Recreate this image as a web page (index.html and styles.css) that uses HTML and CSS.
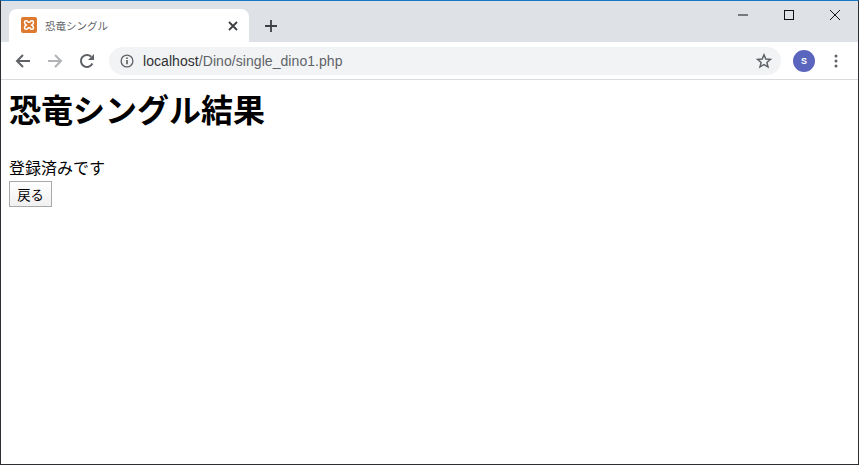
FILE: index.html
```html
<!DOCTYPE html>
<html lang="ja">
<head>
<meta charset="utf-8">
<title>恐竜シングル</title>
<link rel="stylesheet" href="styles.css">
</head>
<body>
<div class="window">
  <div class="tabstrip">
    <div class="tab">
      <svg class="favicon" viewBox="0 0 16 16" width="16" height="16"><rect width="16" height="16" rx="2" fill="#dd7a30"/><path d="M3.500 5.200C3.500 3.600 5.800 3 6.800 4.600L7.300 5.300H8.700L9.200 4.600C10.200 3 12.500 3.600 12.500 5.200C12.500 6.400 11.800 7.400 10.800 8C11.800 8.600 12.500 9.600 12.500 10.800C12.500 12.400 10.200 13 9.200 11.400L8.700 10.700H7.300L6.800 11.400C5.800 13 3.500 12.400 3.500 10.800C3.500 9.600 4.200 8.600 5.200 8C4.200 7.400 3.500 6.400 3.500 5.200Z" fill="none" stroke="#fff" stroke-width="1.500"/></svg>
      <span class="tab-title">恐竜シングル</span>
      <svg class="tab-close" viewBox="0 0 10 10" width="10" height="10"><path d="M1 1l8 8M9 1l-8 8" stroke="#3c4043" stroke-width="1.800"/></svg>
    </div>
    <svg class="newtab" viewBox="0 0 12 12" width="12" height="12"><path d="M6 0v12M0 6h12" stroke="#3c4043" stroke-width="1.800"/></svg>
    <div class="winctrls">
      <svg class="ctrl" viewBox="0 0 46 20" width="46" height="20"><path d="M18 10h10" stroke="#111" stroke-width="1"/></svg>
      <svg class="ctrl" viewBox="0 0 46 20" width="46" height="20"><rect x="18.500" y="5.500" width="9" height="9" fill="none" stroke="#111" stroke-width="1"/></svg>
      <svg class="ctrl" viewBox="0 0 46 20" width="46" height="20"><path d="M18 5l10 10M28 5L18 15" stroke="#111" stroke-width="1"/></svg>
    </div>
  </div>
  <div class="toolbar">
    <svg class="navicon" viewBox="0 0 16 16" width="16" height="16"><path d="M15 8H2M8 2L2 8l6 6" fill="none" stroke="#5f6368" stroke-width="2"/></svg>
    <svg class="navicon" viewBox="0 0 16 16" width="16" height="16"><path d="M1 8h13M8 2l6 6-6 6" fill="none" stroke="#b1b3b6" stroke-width="2"/></svg>
    <svg class="navicon" viewBox="0 0 16 16" width="16" height="16"><path d="M13.400 10.500A6 6 0 1 1 12.200 3.700" fill="none" stroke="#5f6368" stroke-width="2"/><path d="M15 1v6H9z" fill="#5f6368"/></svg>
    <div class="omnibox">
      <svg class="info" viewBox="0 0 14 14" width="14" height="14"><circle cx="7" cy="7" r="5.900" fill="none" stroke="#5f6368" stroke-width="1.300"/><path d="M7 6v4.200" stroke="#444" stroke-width="1.400"/><path d="M7 3.500v1.400" stroke="#444" stroke-width="1.400"/></svg>
      <span class="url"><span class="host">localhost</span>/Dino/single_dino1.php</span>
      <svg class="star" viewBox="0 0 16 16" width="16" height="16"><path d="M8 1.800l1.800 4.200 4.600.4-3.500 3 1.100 4.500L8 11.500l-4 2.400 1.100-4.500-3.500-3 4.600-.4z" fill="none" stroke="#5f6368" stroke-width="1.500"/></svg>
    </div>
    <div class="avatar">S</div>
    <svg class="menu" viewBox="0 0 4 14" width="4" height="14"><circle cx="2" cy="2" r="1.500" fill="#5f6368"/><circle cx="2" cy="7" r="1.500" fill="#5f6368"/><circle cx="2" cy="12" r="1.500" fill="#5f6368"/></svg>
  </div>
  <main class="page">
    <h1 class="heading">恐竜シングル結果</h1>
    <div class="message">登録済みです</div>
    <button class="back" type="button">戻る</button>
  </main>
</div>
</body>
</html>
```
FILE: styles.css
```css
html, body {
  margin: 0;
  padding: 0;
  height: 100%;
  background: #fff;
}
.window {
  box-sizing: border-box;
  width: 859px;
  height: 465px;
  display: flex;
  flex-direction: column;
  border: 1px solid #2b2f33;
  border-top-color: #1a78c2;
  overflow: hidden;
  font-family: "Liberation Sans", "Noto Sans CJK JP", sans-serif;
}
.tabstrip {
  height: 41px;
  flex: none;
  background: #dee1e6;
  display: flex;
  align-items: flex-end;
  padding-left: 8px;
}
.tab {
  box-sizing: border-box;
  width: 240px;
  height: 33px;
  background: #fff;
  border-radius: 8px 8px 0 0;
  display: flex;
  align-items: center;
  padding: 0 11px 0 12px;
}
.favicon { flex: none; margin-top: -1px; }
.tab-title {
  flex: 1;
  margin-left: 8px;
  font-size: 10.500px;
  color: #5f6368;
  font-family: "Noto Sans CJK JP", sans-serif;
}
.newtab {
  flex: none;
  margin: 0 0 10px 16px;
}
.winctrls {
  margin-left: auto;
  display: flex;
  align-self: flex-start;
  margin-top: 4px;
}
.ctrl { display: block; }
.toolbar {
  box-sizing: border-box;
  height: 38px;
  flex: none;
  background: #fff;
  border-bottom: 1px solid #d9dbdf;
  display: flex;
  align-items: center;
  padding: 0 14px;
}
.navicon { flex: none; margin-right: 16px; }
.navicon:nth-child(3) { margin-right: 14px; }
.omnibox {
  flex: none;
  width: 672px;
  height: 28px;
  border-radius: 14px;
  background: #f1f3f4;
  display: flex;
  align-items: center;
  padding: 0 9px 0 11px;
  box-sizing: border-box;
}
.info { flex: none; }
.url {
  flex: 1;
  margin-left: 9px;
  font-family: "Liberation Sans", sans-serif;
  font-size: 14px;
  letter-spacing: 0.06px;
  color: #5f6368;
}
.host { color: #303134; }
.star { flex: none; }
.avatar {
  flex: none;
  width: 22px;
  height: 22px;
  margin-left: 12px;
  border-radius: 50%;
  background: #5a66bd;
  color: #fff;
  font-size: 9px;
  font-weight: bold;
  display: flex;
  align-items: center;
  justify-content: center;
}
.menu { flex: none; margin-left: 19px; }
.page {
  flex: 1;
  background: #fff;
  padding: 0 8px;
  color: #000;
  font-family: "Noto Sans CJK JP", sans-serif;
}
.heading {
  margin: 10px 0 0;
  font-size: 32px;
  line-height: 37px;
  font-weight: bold;
}
.message {
  margin-top: 31px;
  font-size: 16px;
  line-height: 18px;
}
.back {
  display: block;
  box-sizing: border-box;
  width: 43px;
  height: 26px;
  margin-top: 5px;
  padding: 0;
  border: 1px solid #a9a9a9;
  border-radius: 0;
  background: linear-gradient(#fff, #f0f0f0);
  font-family: "Noto Sans CJK JP", sans-serif;
  font-size: 13.330px;
  color: #000;
}
```
